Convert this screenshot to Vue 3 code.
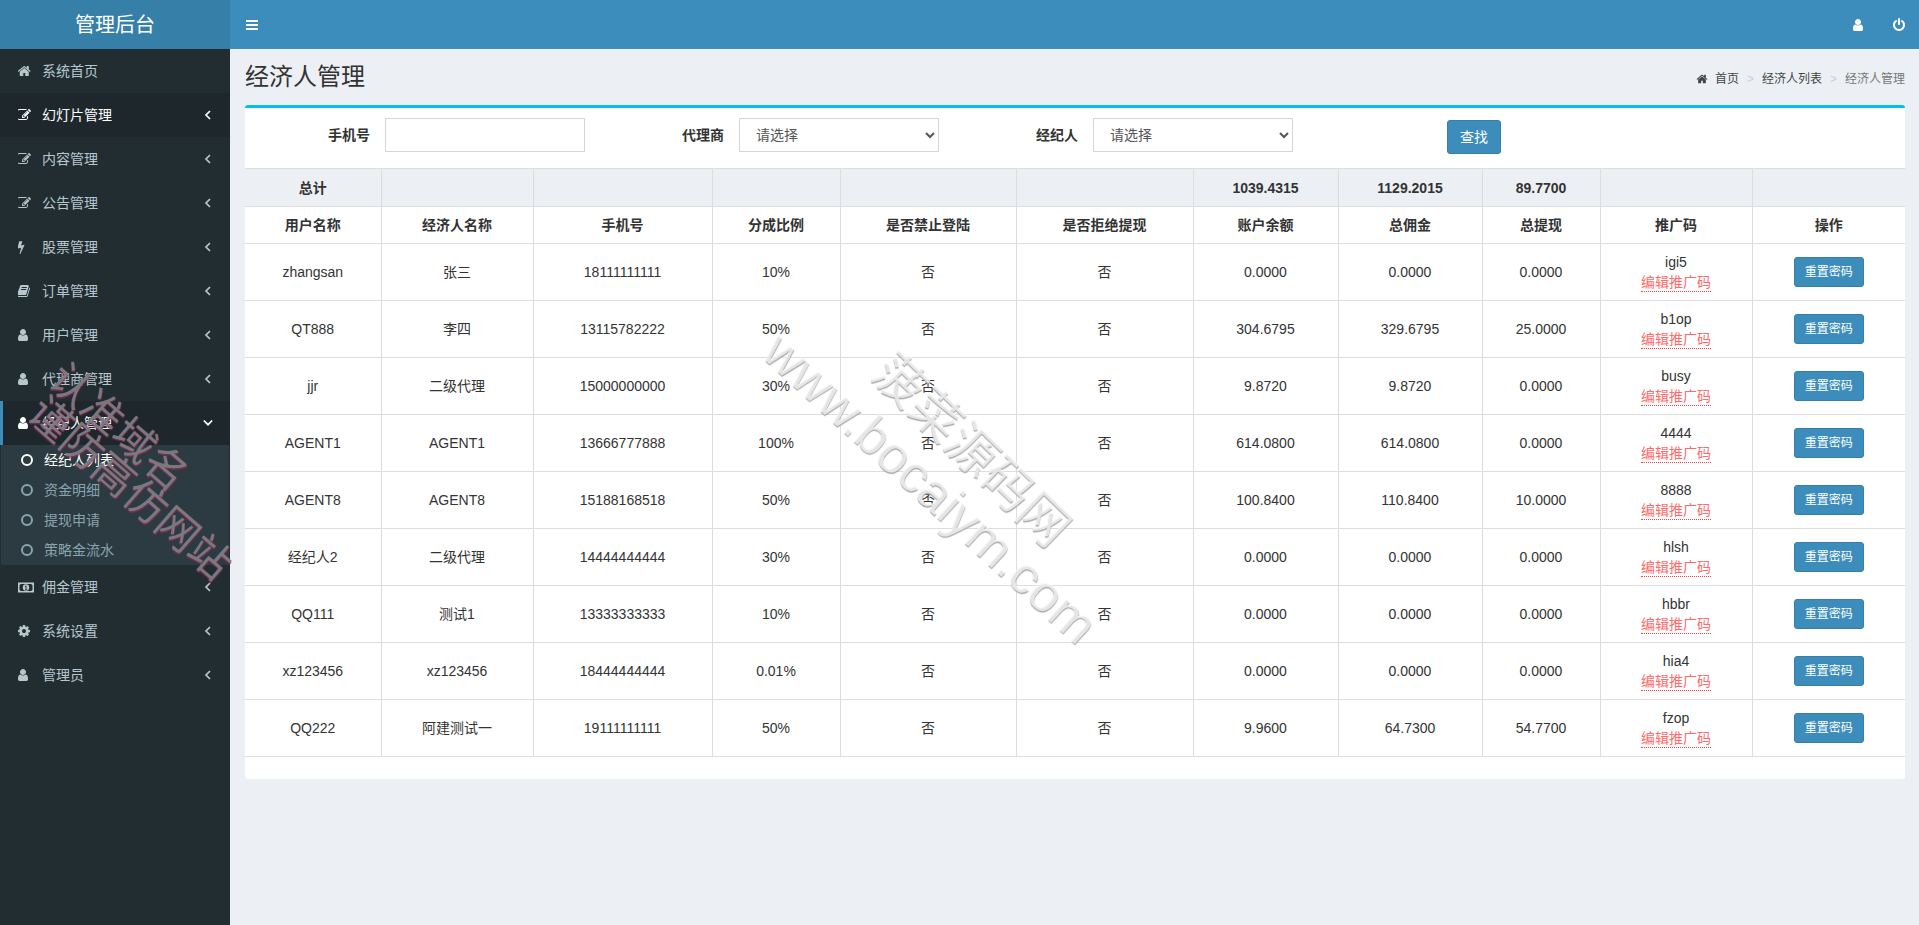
<script setup>
const P = {
  user: 'M1536 1399q0 109-62.500 187t-150.500 78h-854q-88 0-150.500-78t-62.500-187q0-85 8.500-160.500t31.500-152 58.500-131 94-89 134.500-34.500q131 128 313 128t313-128q76 0 134.500 34.500t94 89 58.500 131 31.500 152 8.500 160.500zm-256-887q0 159-112.500 271.500t-271.500 112.500-271.500-112.500-112.500-271.500 112.500-271.500 271.500-112.500 271.500 112.500 112.500 271.500z',
  home: 'M1472 992v480q0 26-19 45t-45 19h-384v-384h-256v384h-384q-26 0-45-19t-19-45v-480q0-1 .5-3t.5-3l575-474 575 474q1 2 1 6zm223-69l-62 74q-8 9-21 11h-3q-13 0-21-7l-692-577-692 577q-12 8-24 7-13-2-21-11l-62-74q-8-10-7-23.500t11-21.500l719-599q32-26 76-26t76 26l244 204v-195q0-14 9-23t23-9h192q14 0 23 9t9 23v408l219 182q10 8 11 21.500t-7 23.500z',
  bars: 'M1664 1344v128q0 26-19 45t-45 19h-1408q-26 0-45-19t-19-45v-128q0-26 19-45t45-19h1408q26 0 45 19t19 45zm0-512v128q0 26-19 45t-45 19h-1408q-26 0-45-19t-19-45v-128q0-26 19-45t45-19h1408q26 0 45 19t19 45zm0-512v128q0 26-19 45t-45 19h-1408q-26 0-45-19t-19-45v-128q0-26 19-45t45-19h1408q26 0 45 19t19 45z',
  bolt: 'M1303 611q18 20 7 44l-540 1157q-13 25-42 25-4 0-14-2-17-5-25.500-19t-4.500-30l197-808-406 101q-4 1-12 1-18 0-31-11-18-15-13-39l201-825q4-14 16-23t28-9h328q19 0 32 12.500t13 29.500q0 8-5 18l-171 463 396-98q8-2 12-2 19 0 34 15z',
  edit: 'M888 1184l116-116-152-152-116 116v56h96v96h56zm440-720q-16-16-33 1l-350 350q-17 17-1 33t33-1l350-350q17-17 1-33zm80 594v190q0 119-84.500 203.500t-203.500 84.500h-832q-119 0-203.500-84.500t-84.500-203.500v-832q0-119 84.500-203.500t203.500-84.500h832q63 0 117 25 15 7 18 23 3 17-9 29l-49 49q-14 14-32 8-23-6-45-6h-832q-66 0-113 47t-47 113v832q0 66 47 113t113 47h832q66 0 113-47t47-113v-126q0-13 9-22l64-64q15-15 35-7t20 29zm-96-738l288 288-672 672h-288v-288zm444 132l-92 92-288-288 92-92q28-28 68-28t68 28l152 152q28 28 28 68t-28 68z',
  book: 'M1639 478q40 57 18 129l-275 906q-19 64-76.500 107.500t-122.500 43.500h-923q-77 0-148.500-53.500t-99.500-131.500q-24-67-2-127 0-4 3-27t4-37q1-8-3-21.500t-3-19.500q2-11 8-21t16.500-23.500 16.500-23.500q23-38 45-91.500t30-91.500q3-10 .5-30t-.5-28q3-11 17-28t17-23q21-36 42-92t25-90q1-9-2.500-32t.5-28q4-13 22-30.500t22-22.500q19-26 42.500-84.500t27.500-96.500q1-8-3-25.500t-2-26.500q2-8 9-18t18-23 17-21q8-12 16.500-30.500t15-35 16-36 19.500-32 26.500-23.500 36-11.500 47.500 5.500l-1 3q38-9 51-9h761q74 0 114 56t18 130l-274 906q-36 119-71.500 153.500t-128.500 34.500h-869q-27 0-38 15-11 16-1 43 24 70 144 70h923q29 0 56-15.500t35-41.500l300-987q7-22 5-57 38 15 59 43zm-1064 2q-4 13 2 22.500t20 9.500h608q13 0 25.500-9.500t16.500-22.500l21-64q4-13-2-22.500t-20-9.500h-608q-13 0-25.500 9.500t-16.500 22.500zm-83 256q-4 13 2 22.500t20 9.500h608q13 0 25.500-9.500t16.500-22.500l21-64q4-13-2-22.500t-20-9.500h-608q-13 0-25.500 9.500t-16.500 22.500z',
  cog: 'M1152 896q0-106-75-181t-181-75-181 75-75 181 75 181 181 75 181-75 75-181zm512-109v222q0 12-8 23t-20 13l-185 28q-19 54-39 91 35 50 107 138 10 12 10 25t-9 23q-27 37-99 108t-94 71q-12 0-26-9l-138-108q-44 23-91 38-16 136-29 186-7 28-36 28h-222q-14 0-24.500-8.500t-11.500-21.500l-28-184q-49-16-90-37l-141 107q-10 9-25 9-14 0-25-11-126-114-165-168-7-10-7-23 0-12 8-23 15-21 51-66.500t54-70.500q-27-50-41-99l-183-27q-13-2-21-12.500t-8-23.500v-222q0-12 8-23t19-13l186-28q14-46 39-92-40-57-107-138-10-12-10-24 0-10 9-23 26-36 98.500-107.500t94.500-71.500q13 0 26 10l138 107q44-23 91-38 16-136 29-186 7-28 36-28h222q14 0 24.500 8.500t11.500 21.500l28 184q49 16 90 37l142-107q9-9 24-9 13 0 25 10 129 119 165 170 7 8 7 22 0 12-8 23-15 21-51 66.500t-54 70.500q26 50 41 98l183 28q13 2 21 12.500t8 23.500z',
  power: 'M1664 896q0 156-61 298t-164 245-245 164-298 61-298-61-245-164-164-245-61-298q0-182 80.500-343t226.500-270q43-32 95.500-25t83.500 50q32 42 24.500 94.500t-49.500 84.500q-98 74-151.500 181t-53.500 228q0 104 40.500 198.500t109.500 163.500 163.500 109.500 198.500 40.500 198.500-40.500 163.500-109.500 109.500-163.500 40.500-198.500q0-121-53.500-228t-151.500-181q-42-32-49.500-84.500t24.500-94.500q31-43 84-50t95 25q146 109 226.500 270t80.500 343zm-640-768v640q0 52-38 90t-90 38-90-38-38-90v-640q0-52 38-90t90-38 90 38 38 90z'
}
const offs = { user: 256, bolt: 480, home: 96, cog: 128, book: 128, edit: 128 }
const box = (i) => `${offs[i] || 0} 0 1792 1792`
const menu = [
  { t: '系统首页', i: 'home', noArrow: true },
  { t: '幻灯片管理', i: 'edit', hover: true },
  { t: '内容管理', i: 'edit' },
  { t: '公告管理', i: 'edit' },
  { t: '股票管理', i: 'bolt' },
  { t: '订单管理', i: 'book' },
  { t: '用户管理', i: 'user' },
  { t: '代理商管理', i: 'user' },
  { t: '经纪人管理', i: 'user', open: true, sub: ['经纪人列表', '资金明细', '提现申请', '策略金流水'] },
  { t: '佣金管理', i: 'money' },
  { t: '系统设置', i: 'cog' },
  { t: '管理员', i: 'user' }
]
const cols = [136, 152, 179, 128, 176, 177, 145, 144, 118, 152, 153]
const totals = ['总计', '', '', '', '', '', '1039.4315', '1129.2015', '89.7700', '', '']
const heads = ['用户名称', '经济人名称', '手机号', '分成比例', '是否禁止登陆', '是否拒绝提现', '账户余额', '总佣金', '总提现', '推广码', '操作']
const rows = [
  ['zhangsan', '张三', '18111111111', '10%', '0.0000', '0.0000', '0.0000', 'igi5'],
  ['QT888', '李四', '13115782222', '50%', '304.6795', '329.6795', '25.0000', 'b1op'],
  ['jjr', '二级代理', '15000000000', '30%', '9.8720', '9.8720', '0.0000', 'busy'],
  ['AGENT1', 'AGENT1', '13666777888', '100%', '614.0800', '614.0800', '0.0000', '4444'],
  ['AGENT8', 'AGENT8', '15188168518', '50%', '100.8400', '110.8400', '10.0000', '8888'],
  ['经纪人2', '二级代理', '14444444444', '30%', '0.0000', '0.0000', '0.0000', 'hlsh'],
  ['QQ111', '测试1', '13333333333', '10%', '0.0000', '0.0000', '0.0000', 'hbbr'],
  ['xz123456', 'xz123456', '18444444444', '0.01%', '0.0000', '0.0000', '0.0000', 'hia4'],
  ['QQ222', '阿建测试一', '19111111111', '50%', '9.9600', '64.7300', '54.7700', 'fzop']
]
</script>

<template>
  <div class="app">
    <aside class="side">
      <div class="logo">管理后台</div>
      <ul class="menu">
        <li v-for="m in menu" :key="m.t">
          <div class="item" :class="{ hover: m.hover, open: m.open }">
            <svg v-if="m.i === 'money'" class="ic money" viewBox="0 0 16 11">
              <path fill-rule="evenodd" d="M0 .5h16v10H0zM1.500 3v5a1 1 0 0 1 1 1h11a1 1 0 0 1 1-1V3a1 1 0 0 1-1-1h-11a1 1 0 0 1-1 1zM8 2.300a3.200 3.200 0 1 1 0 6.400a3.200 3.200 0 0 1 0-6.400zM7 4.300v.7h.7v2H7v.7h2.200V7h-.7V3.800h-.7z" />
            </svg>
            <svg v-else class="ic" :viewBox="box(m.i)"><path :d="P[m.i]" /></svg>
            <span class="label">{{ m.t }}</span>
            <svg v-if="!m.noArrow" class="arrow" viewBox="0 0 10 12">
              <path v-if="m.open" d="M.8 3.500l4.200 4.200 4.200-4.200" />
              <path v-else d="M7 2L3 6l4 4" />
            </svg>
          </div>
          <ul v-if="m.sub" class="sub">
            <li v-for="(s, k) in m.sub" :key="s" class="subitem" :class="{ on: k === 0 }">
              <svg class="ring" viewBox="0 0 14 14"><circle cx="7" cy="7" r="5" /></svg>
              <span>{{ s }}</span>
            </li>
          </ul>
        </li>
      </ul>
    </aside>

    <div class="main">
      <header class="top">
        <svg class="topic bars" viewBox="0 0 1792 1792"><path :d="P.bars" /></svg>
        <div class="topright">
          <svg class="topic" viewBox="0 0 1792 1792"><path :d="P.user" /></svg>
          <svg class="topic" viewBox="0 0 1792 1792"><path :d="P.power" /></svg>
        </div>
      </header>

      <section class="content">
        <div class="heading">
          <h1>经济人管理</h1>
          <div class="crumb">
            <svg class="crumbic" viewBox="0 0 1792 1792"><path :d="P.home" /></svg>
            <span class="c1">首页</span><i>&gt;</i><span class="c1">经济人列表</span><i>&gt;</i><span class="c2">经济人管理</span>
          </div>
        </div>

        <div class="box">
          <form class="filter" @submit.prevent>
            <div class="group"><label>手机号</label><input type="text" /></div>
            <div class="group"><label>代理商</label><select><option>请选择</option></select></div>
            <div class="group"><label>经纪人</label><select><option>请选择</option></select></div>
            <div class="group"><button class="btn search" type="button">查找</button></div>
          </form>
          <table>
            <colgroup><col v-for="(c, i) in cols" :key="i" :style="{ width: c + 'px' }" /></colgroup>
            <thead>
              <tr class="total"><th v-for="(t, i) in totals" :key="i">{{ t }}</th></tr>
              <tr class="head"><th v-for="h in heads" :key="h">{{ h }}</th></tr>
            </thead>
            <tbody>
              <tr v-for="r in rows" :key="r[0]">
                <td>{{ r[0] }}</td>
                <td>{{ r[1] }}</td>
                <td>{{ r[2] }}</td>
                <td>{{ r[3] }}</td>
                <td>否</td>
                <td>否</td>
                <td>{{ r[4] }}</td>
                <td>{{ r[5] }}</td>
                <td>{{ r[6] }}</td>
                <td><div>{{ r[7] }}</div><a class="edit">编辑推广码</a></td>
                <td><button class="btn small" type="button">重置密码</button></td>
              </tr>
            </tbody>
          </table>
        </div>
      </section>
    </div>

    <div class="wm wm1">认准域名</div>
    <div class="wm wm2">谨防高仿网站</div>
    <div class="wm wm3">www.bocaiym.com</div>
    <div class="wm wm4">菠菜源码网</div>
  </div>
</template>

<style>
html, body { margin: 0; background: #ecf0f5; }
</style>

<style scoped>
* { box-sizing: border-box; }
.app {
  position: relative; display: flex; min-height: 925px; overflow: hidden;
  background: #ecf0f5; color: #333;
  font: 14px/20px "Liberation Sans", "Noto Sans CJK SC", sans-serif;
}
ul { margin: 0; padding: 0; list-style: none; }
.side { width: 230px; flex: none; background: #222d32; }
.logo { height: 49px; background: #367fa9; color: #fff; font-size: 20px; line-height: 50px; text-align: center; }
.item { height: 44px; display: flex; align-items: center; padding-left: 18px; color: #b8c7ce; border-left: 0 solid #3c8dbc; }
.ic { width: 14px; height: 14px; fill: currentColor; flex: none; }
.money { width: 16px; height: 11px; }
.label { margin-left: 10px; }
.money + .label { margin-left: 8px; }
.arrow { width: 10px; height: 12px; margin-left: auto; margin-right: 17px; fill: none; stroke: currentColor; stroke-width: 1.700; }
.item.hover { background: #1e282c; color: #fff; }
.item.open { background: #1e282c; color: #fff; border-left-width: 3px; padding-left: 15px; }
.sub { margin: 0 1px; background: #2c3b41; }
.subitem { height: 30px; display: flex; align-items: center; padding-left: 19px; color: #8aa4af; }
.subitem.on { color: #fff; }
.subitem span { margin-left: 10px; }
.ring { width: 14px; height: 14px; fill: none; stroke: currentColor; stroke-width: 2; }

.main { flex: 1; min-width: 0; }
.top { height: 49px; background: #3c8dbc; display: flex; align-items: center; justify-content: space-between; padding: 0 13px 0 15px; }
.topic { width: 14px; height: 14px; fill: #fff; }
.topright { display: flex; gap: 27px; }
.content { padding: 0 14px 0 15px; }
.heading { height: 56px; display: flex; align-items: center; justify-content: space-between; }
h1 { margin: 0; font-size: 24px; font-weight: 400; line-height: 60px; }
.crumb { display: flex; align-items: center; font-size: 12px; color: #444; margin-top: 4px; }
.crumb i { font-style: normal; color: #ccc; padding: 0 8px; }
.crumbic { width: 12px; height: 12px; fill: #444; margin-right: 7px; }
.c2 { color: #777; }

.box { background: #fff; border-top: 3px solid #00c0ef; border-radius: 3px; height: 674px; }
.filter { display: flex; height: 60px; padding-top: 10px; }
.group { display: flex; width: 354px; height: 34px; }
.group label { width: 125px; margin-right: 15px; text-align: right; font-weight: 700; line-height: 34px; }
.group input, .group select {
  width: 200px; height: 34px; border: 1px solid #d2d6de; background: #fff; color: #555;
  font: inherit; padding: 0 12px; outline: 0; border-radius: 0;
}
.btn { background: #3c8dbc; border: 1px solid #367fa9; color: #fff; border-radius: 3px; font: inherit; }
.search { width: 54px; height: 34px; margin: 2px 0 0 140px; padding: 0; }
.small { width: 70px; height: 30px; font-size: 12px; padding: 0; line-height: 18px; }

table { width: 1660px; table-layout: fixed; border-collapse: collapse; text-align: center; }
th, td { border: 1px solid #ddd; padding: 0 8px; }
th:first-child, td:first-child { border-left: 0; }
th:last-child, td:last-child { border-right: 0; }
.total th { height: 38px; background: #ecf0f5; }
.head th { height: 37px; }
td { height: 57px; }
.edit { display: inline-block; height: 19px; line-height: 18px; color: #ff6b6b; border-bottom: 1px dotted #ff3b3b; }

.wm { position: absolute; white-space: nowrap; transform-origin: 0 50%; }
.wm1, .wm2 {
  color: rgba(125, 128, 133, .92); font: 42px/42px "Noto Sans CJK SC", sans-serif;
  text-shadow: 1px 1px 1px rgba(150, 40, 90, .8); transform: rotate(41deg);
}
.wm1 { left: 57px; top: 348px; }
.wm2 { left: 37px; top: 382px; }
.wm3, .wm4 { color: rgba(248, 248, 248, .75); text-shadow: 1px 1px 1px #aaa; }
.wm3 { left: 772px; top: 316px; font: 52px/52px "Liberation Sans", sans-serif; transform: rotate(42.500deg); }
.wm4 { left: 885px; top: 335px; font: 50px/50px "Noto Sans CJK SC", sans-serif; transform: rotate(44deg); }
</style>
